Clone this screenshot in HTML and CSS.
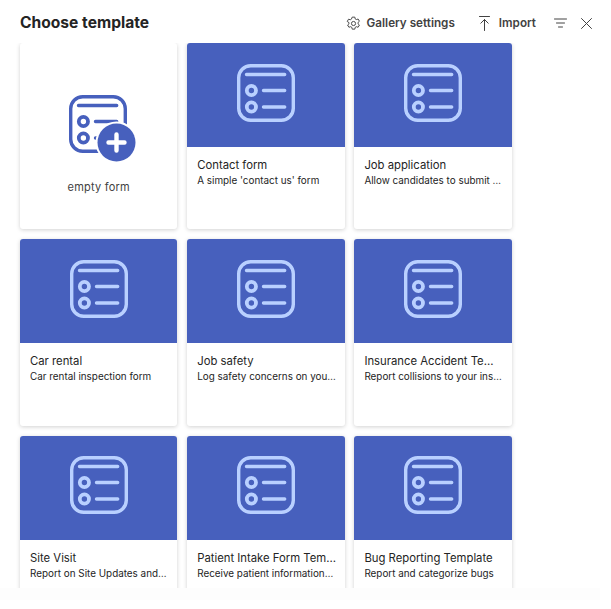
FILE: index.html
```html
<!DOCTYPE html>
<html lang="en">
<head>
<meta charset="utf-8">
<title>Choose template</title>
<link rel="stylesheet" href="styles.css">
</head>
<body>
<svg class="defs" width="0" height="0" aria-hidden="true">
  <symbol id="form" viewBox="0 0 58 58">
    <rect x="1.700" y="1.700" width="54.600" height="54.600" rx="12" fill="none" stroke="currentColor" stroke-width="3.400"/>
    <path d="M9.500 10.500H47.700M26.500 26.500H47.700M26.500 43H47.700" fill="none" stroke="currentColor" stroke-width="3.400" stroke-linecap="round"/>
    <circle cx="14.400" cy="26.500" r="4.600" fill="none" stroke="currentColor" stroke-width="3.800"/>
    <circle cx="14.400" cy="43" r="4.600" fill="none" stroke="currentColor" stroke-width="3.800"/>
  </symbol>
</svg>
<main class="panel">
  <header class="top">
    <h1 class="heading">Choose template</h1>
    <nav class="actions">
      <button class="action action-settings">
        <svg class="ic" width="15" height="15" viewBox="0 0 16 16" fill="none" stroke="currentColor" stroke-width="1" stroke-linejoin="round"><path d="M6.600 1.200h2.800l.4 1.900 1.200.7 1.900-.6 1.400 2.400-1.500 1.300v1.400l1.500 1.300-1.400 2.400-1.900-.6-1.200.7-.4 1.900H6.600l-.4-1.900-1.200-.7-1.900.6-1.400-2.400 1.500-1.300V7.100L1.300 5.800l1.400-2.400 1.900.6 1.200-.7z"/><circle cx="8" cy="8" r="2.200"/></svg>
        <span>Gallery settings</span>
      </button>
      <button class="action action-import">
        <svg class="ic" width="11" height="15" viewBox="0 0 11 15" fill="none" stroke="currentColor" stroke-width="1" stroke-linecap="round" stroke-linejoin="round"><path d="M.5 .5H10.500M5.500 14.500V3.500M1.800 7.200L5.500 3.500l3.700 3.700"/></svg>
        <span>Import</span>
      </button>
      <button class="action icon-only icon-filter" aria-label="Filter">
        <svg width="13" height="10" viewBox="0 0 13 10" fill="none" stroke="currentColor" stroke-width="1" stroke-linecap="round"><path d="M.5 1H12.500M2.500 5H10.500M4.500 9H8.500"/></svg>
      </button>
      <button class="action icon-only" aria-label="Close">
        <svg width="11" height="11" viewBox="0 0 11 11" fill="none" stroke="currentColor" stroke-width="1" stroke-linecap="round"><path d="M.5 .5L10.500 10.500M10.500 .5L.5 10.500"/></svg>
      </button>
    </nav>
  </header>
  <section class="grid">
    <article class="card card-empty">
      <svg class="empty-icon" width="67" height="67" viewBox="0 0 67 67">
        <svg x="0" y="0" width="58" height="58" class="blue"><use href="#form"/></svg>
        <circle cx="47.500" cy="47.500" r="21" fill="#fff"/>
        <circle cx="47.500" cy="47.500" r="19" fill="#4760bd"/>
        <path d="M39.500 47.500H55.500M47.500 39.500V55.500" stroke="#fff" stroke-width="4.400" stroke-linecap="round"/>
      </svg>
      <p class="empty-label">empty form</p>
    </article>
    <article class="card"><div class="thumb"><svg class="form-icon"><use href="#form"/></svg></div><div class="body"><h2 class="name">Contact form</h2><p class="desc">A simple 'contact us' form</p></div></article>
    <article class="card"><div class="thumb"><svg class="form-icon"><use href="#form"/></svg></div><div class="body"><h2 class="name">Job application</h2><p class="desc">Allow candidates to submit their resumes</p></div></article>
    <article class="card"><div class="thumb"><svg class="form-icon"><use href="#form"/></svg></div><div class="body"><h2 class="name">Car rental</h2><p class="desc">Car rental inspection form</p></div></article>
    <article class="card"><div class="thumb"><svg class="form-icon"><use href="#form"/></svg></div><div class="body"><h2 class="name">Job safety</h2><p class="desc">Log safety concerns on your job site</p></div></article>
    <article class="card"><div class="thumb"><svg class="form-icon"><use href="#form"/></svg></div><div class="body"><h2 class="name">Insurance Accident Template</h2><p class="desc">Report collisions to your insurer</p></div></article>
    <article class="card"><div class="thumb"><svg class="form-icon"><use href="#form"/></svg></div><div class="body"><h2 class="name">Site Visit</h2><p class="desc">Report on Site Updates and progress</p></div></article>
    <article class="card"><div class="thumb"><svg class="form-icon"><use href="#form"/></svg></div><div class="body"><h2 class="name">Patient Intake Form Template</h2><p class="desc">Receive patient information before visits</p></div></article>
    <article class="card"><div class="thumb"><svg class="form-icon"><use href="#form"/></svg></div><div class="body"><h2 class="name">Bug Reporting Template</h2><p class="desc">Report and categorize bugs</p></div></article>
  </section>
  <div class="foot"></div>
</main>
</body>
</html>
```
FILE: styles.css
```css
* { box-sizing: border-box; }
html, body { margin: 0; height: 100%; }
body { background: #fff; font-family: Inter, "Liberation Sans", sans-serif; color: #242424; overflow: hidden; }
.defs { position: absolute; }
.panel { height: 609px; display: flex; flex-direction: column; }
.top { height: 43px; padding: 13px 19px 0 20px; display: flex; justify-content: space-between; align-items: flex-start; flex: none; }
.heading { margin: 0; font-size: 15.600px; line-height: 19px; font-weight: 700; }
.actions { display: flex; align-items: center; height: 20px; }
.action { display: flex; align-items: center; gap: 6px; border: 0; background: none; padding: 0; font: 600 11.700px/20px Inter, "Liberation Sans", sans-serif; color: #424242; }
.action-settings { margin-right: 24px; }
.action-import { margin-right: 18px; gap: 9px; }
.icon-only { margin-right: 14px; }
.icon-only:last-child { margin-right: 0; }
.grid { height: 545px; padding: 0 0 0 20px; overflow: hidden; display: grid; grid-template-columns: repeat(3, 157.400px); grid-auto-rows: 186.400px; column-gap: 9.800px; row-gap: 10px; flex: none; }
.card { background: #fff; border-radius: 3px; box-shadow: 0 1px 4px rgba(0,0,0,.18); overflow: hidden; }
.card-empty { display: flex; flex-direction: column; align-items: center; padding-top: 52px; }
.empty-icon { display: block; margin-left: 8px; color: #4760bd; }
.blue { color: #4760bd; }
.empty-label { margin: 18px 0 0; font-size: 11px; line-height: 14px; letter-spacing: .2px; color: #424242; }
.thumb { height: 104px; padding-bottom: 5px; background: #4760bd; display: flex; align-items: center; justify-content: center; }
.form-icon { width: 58px; height: 58px; color: #b9d0ff; }
.body { padding: 11px 8.600px 0 10px; }
.name { margin: 0; font-size: 11.300px; line-height: 15px; font-weight: 400; white-space: nowrap; overflow: hidden; text-overflow: ellipsis; }
.desc { margin: 0; font-size: 9.900px; line-height: 14px; white-space: nowrap; overflow: hidden; text-overflow: ellipsis; }
.foot { height: 12px; width: 600px; background: #fdfdfd; flex: none; }
```
